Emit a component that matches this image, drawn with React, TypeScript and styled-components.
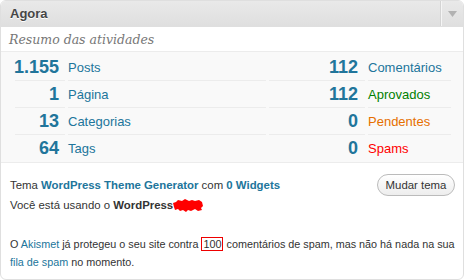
import React from 'react';
import styled, { createGlobalStyle } from 'styled-components';

const GlobalStyle = createGlobalStyle`
  body {
    margin: 0;
    background: #ffffff;
    font-family: "Liberation Sans", Arial, sans-serif;
    color: #333;
  }
`;

const Widget = styled.div`
  box-sizing: border-box;
  width: 464px;
  height: 280px;
  border: 1px solid #dfdfdf;
  border-radius: 6px;
  overflow: hidden;
  background: #fff;
`;

const Header = styled.div`
  display: flex;
  align-items: center;
  height: 25px;
  background: linear-gradient(to bottom, #e9e9e9, #dfdfdf);
  border-bottom: 1px solid #dfdfdf;
`;

const Title = styled.h3`
  flex: 1;
  margin: 0;
  padding-left: 9px;
  font-size: 13px;
  font-weight: bold;
  color: #464646;
  text-shadow: 0 1px 0 #fff;
`;

const Toggle = styled.div`
  width: 21px;
  height: 100%;
  border-left: 1px solid #f5f5f5;
  box-shadow: -1px 0 0 #d4d4d4;
  display: flex;
  align-items: center;
  justify-content: center;
`;

const Subtitle = styled.p`
  margin: 0;
  height: 24px;
  line-height: 25px;
  padding-left: 8px;
  font-family: "DejaVu Serif", Georgia, serif;
  font-style: italic;
  font-size: 12.5px;
  color: #777;
  border-bottom: 1px solid #ececec;
`;

const Stats = styled.div`
  display: grid;
  grid-template-columns: 50px 198px 96px 83px;
  column-gap: 3px;
  padding: 2px 12px 0 14px;
  background: #f9f9f9;
  border-bottom: 1px solid #ececec;
`;

const Cell = styled.div<{ $last?: boolean; $num?: boolean; $pad?: number }>`
  height: 26px;
  display: flex;
  align-items: center;
  justify-content: ${(p) => (p.$num ? 'flex-end' : 'flex-start')};
  padding-right: ${(p) => (p.$num ? `${p.$pad ?? 6}px` : '0')};
  border-bottom: 1px solid ${(p) => (p.$last ? 'transparent' : '#ececec')};
`;

const Num = styled.span`
  font-size: 18px;
  font-weight: bold;
  color: #21759b;
`;

const Label = styled.span<{ $color?: string }>`
  font-size: 13px;
  color: ${(p) => p.$color || '#21759b'};
`;

const Body = styled.div`
  padding: 10px 6px 0 9px;
  font-size: 11.4px;
`;

const ThemeRow = styled.div`
  display: flex;
  align-items: center;
  justify-content: space-between;
  height: 23px;
  padding-right: 2px;
`;

const Link = styled.a<{ $bold?: boolean }>`
  color: #21759b;
  text-decoration: none;
  font-weight: ${(p) => (p.$bold ? 'bold' : 'normal')};
`;

const Button = styled.button`
  font-family: "Liberation Sans", Arial, sans-serif;
  font-size: 11.4px;
  color: #333;
  height: 22px;
  width: 78px;
  padding: 0;
  border: 1px solid #bbb;
  border-radius: 11px;
  background: linear-gradient(to bottom, #ffffff, #ededed);
`;

const Line = styled.p`
  margin: 0;
  line-height: 18px;
`;

const Akismet = styled.p`
  margin: 21px 0 0;
  line-height: 18px;
  font-size: 10.8px;
`;

const Boxed = styled.span`
  border: 1px solid #e00;
  padding: 0 1px;
`;

const Scribble = () => (
  <svg width="30" height="13" viewBox="0 0 30 13" style={{ verticalAlign: 'middle' }}>
    <path
      d="M0 4 L3 3 L5 1 L9 2 L12 0 L16 2 L19 1 L22 2 L26 1 L29 3 L30 7 L28 9 L29 11 L25 12 L22 10 L18 12 L15 11 L13 13 L10 11 L7 12 L5 10 L2 11 L1 8 Z"
      fill="#f00"
    />
  </svg>
);

const rows = [
  { n: '1.155', l: 'Posts', rn: '112', rl: 'Comentários', rc: '#21759b' },
  { n: '1', l: 'Página', rn: '112', rl: 'Aprovados', rc: '#008000' },
  { n: '13', l: 'Categorias', rn: '0', rl: 'Pendentes', rc: '#e66f00' },
  { n: '64', l: 'Tags', rn: '0', rl: 'Spams', rc: '#ff0000' },
];

const App: React.FC = () => (
  <>
    <GlobalStyle />
    <Widget>
      <Header>
        <Title>Agora</Title>
        <Toggle>
          <svg width="9" height="6" viewBox="0 0 9 6">
            <path d="M0 0 H9 L4.5 6 Z" fill="#b2b2b2" />
          </svg>
        </Toggle>
      </Header>
      <Subtitle>Resumo das atividades</Subtitle>
      <Stats>
        {rows.map((r, i) => {
          const last = i === rows.length - 1;
          return (
            <React.Fragment key={r.l}>
              <Cell $num $last={last}><Num>{r.n}</Num></Cell>
              <Cell $last={last}><Label>{r.l}</Label></Cell>
              <Cell $num $pad={7} $last={last}><Num>{r.rn}</Num></Cell>
              <Cell $last={last}><Label $color={r.rc}>{r.rl}</Label></Cell>
            </React.Fragment>
          );
        })}
      </Stats>
      <Body>
        <ThemeRow>
          <span>
            Tema <Link $bold>WordPress Theme Generator</Link> com <Link $bold>0 Widgets</Link>
          </span>
          <Button>Mudar tema</Button>
        </ThemeRow>
        <Line>
          Você está usando o <b>WordPress</b>
          <Scribble />
        </Line>
        <Akismet>
          O <Link>Akismet</Link> já protegeu o seu site contra <Boxed>100</Boxed> comentários de spam, mas não há nada na sua{' '}
          <Link>fila de spam</Link> no momento.
        </Akismet>
      </Body>
    </Widget>
  </>
);

export default App;
